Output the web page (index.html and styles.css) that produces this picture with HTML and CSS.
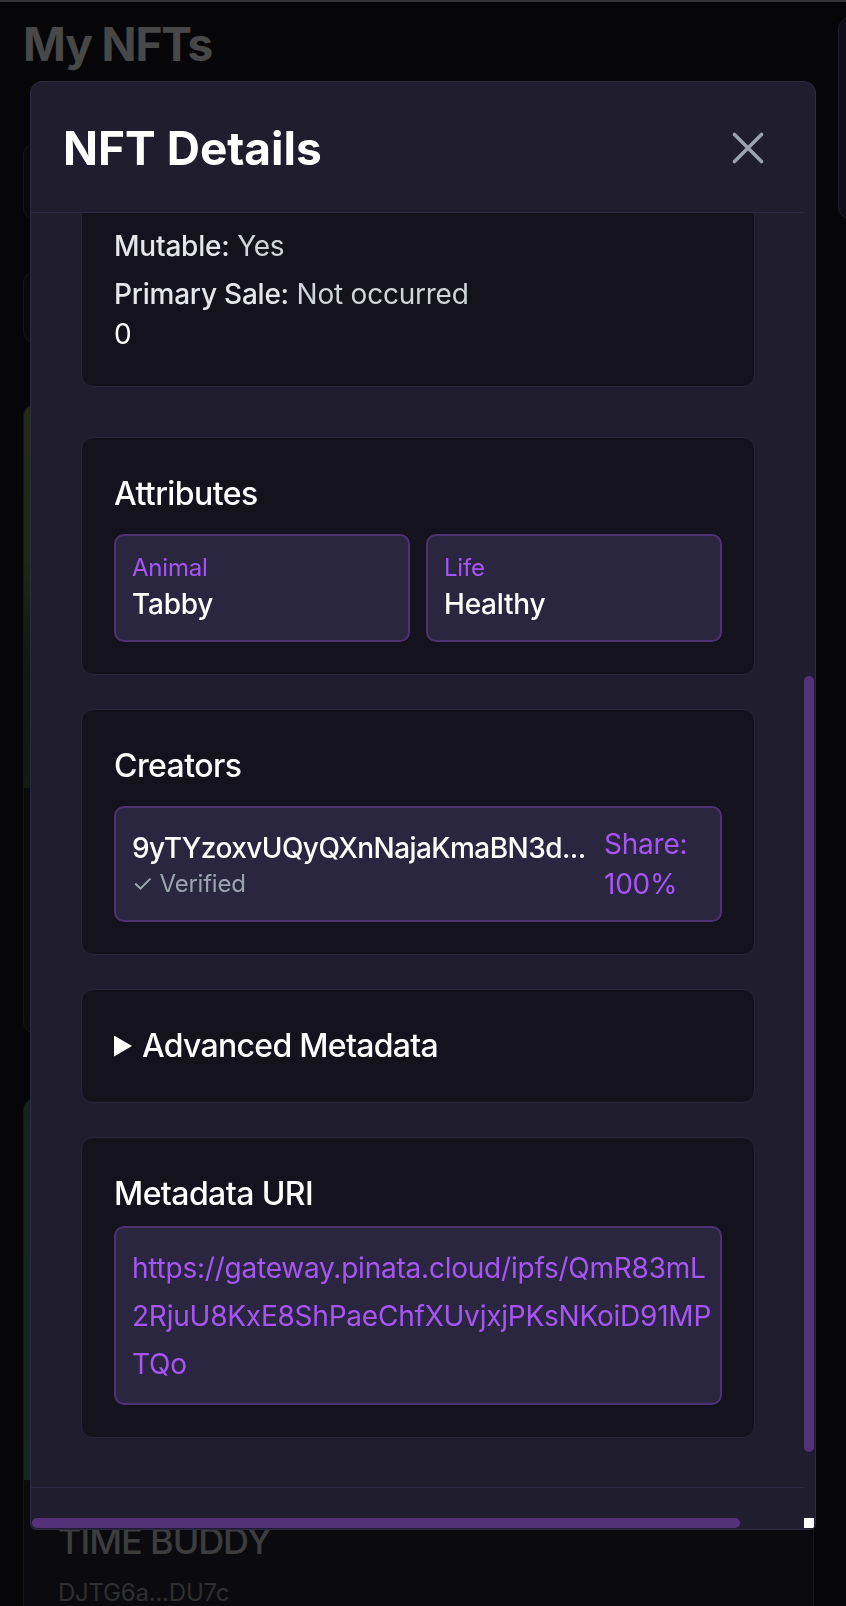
FILE: index.html
```html
<!DOCTYPE html>
<html lang="en">
<head>
<meta charset="utf-8">
<title>My NFTs</title>
<link rel="stylesheet" href="styles.css">
</head>
<body>
<div class="topline"></div>
<div class="page">
  <main class="main">
    <h1 class="page-title">My NFTs</h1>
    <div class="stub stub-a"></div>
    <div class="stub stub-b"></div>
    <article class="nft-card card-green">
      <div class="nft-img img-green"></div>
    </article>
    <article class="nft-card card-teal">
      <div class="nft-img img-teal"></div>
      <div class="nft-body">
        <h3 class="nft-name">TIME BUDDY</h3>
        <p class="nft-mint">DJTG6a...DU7c</p>
      </div>
    </article>
  </main>
  <aside class="side"></aside>
</div>

<div class="backdrop">
  <section class="modal">
    <div class="modal-main">
      <header class="modal-header">
        <h2 class="modal-title">NFT Details</h2>
        <button class="close-btn" aria-label="Close">
          <svg width="48" height="48" viewBox="0 0 48 48" fill="none"><path d="M10.5 10.5L37.5 37.5M37.5 10.5L10.5 37.5" stroke="currentColor" stroke-width="3.6" stroke-linecap="round"/></svg>
        </button>
      </header>
      <div class="modal-body">
        <div class="panel panel-props">
          <p class="kv"><span class="k">Mutable:</span> Yes</p>
          <p class="kv"><span class="k">Primary Sale:</span> Not occurred</p>
          <p class="plain">0</p>
        </div>
        <div class="panel">
          <h3 class="panel-title">Attributes</h3>
          <div class="attr-grid">
            <div class="chip">
              <div class="chip-label">Animal</div>
              <div class="chip-value">Tabby</div>
            </div>
            <div class="chip">
              <div class="chip-label">Life</div>
              <div class="chip-value">Healthy</div>
            </div>
          </div>
        </div>
        <div class="panel">
          <h3 class="panel-title">Creators</h3>
          <div class="chip creator">
            <div class="creator-info">
              <div class="creator-addr">9yTYzoxvUQyQXnNajaKmaBN3d...</div>
              <div class="creator-verified">✓ Verified</div>
            </div>
            <div class="creator-share">Share: 100%</div>
          </div>
        </div>
        <details class="panel adv">
          <summary class="adv-summary"><span class="tri"></span>Advanced Metadata</summary>
        </details>
        <div class="panel">
          <h3 class="panel-title tight">Metadata URI</h3>
          <div class="chip uri-box"><a class="uri" href="#"><span class="uri-line">https://gateway.pinata.cloud/ipfs/QmR83mL</span><span class="uri-line">2RjuU8KxE8ShPaeChfXUvjxjPKsNKoiD91MP</span><span class="uri-line">TQo</span></a></div>
        </div>
      </div>
      <footer class="modal-footer"></footer>
    </div>
    <div class="vscroll"><div class="vthumb"></div></div>
    <div class="hscroll"><div class="hthumb"></div></div>
    <div class="corner"></div>
  </section>
</div>
</body>
</html>
```

FILE: styles.css
```css
* { box-sizing: border-box; }
html, body { margin: 0; padding: 0; }
body {
  width: 846px;
  height: 1606px;
  overflow: hidden;
  background: #0f0f16;
  color: #fff;
  font-family: Inter, "Noto Sans", "Liberation Sans", sans-serif;
  letter-spacing: -0.014em;
}

/* background page (dimmed by backdrop) */
.topline { height: 2px; background: #808080; }
.page {
  display: grid;
  grid-template-columns: 791px 200px;
  column-gap: 24px;
  padding-left: 23px;
}
.page-title {
  margin: 10px 0 0;
  font-size: 46px;
  line-height: 64px;
  font-weight: 700;
  letter-spacing: -0.025em;
  color: #b4b4b4;
}
.stub {
  border: 1px solid #34344a;
  background: #17171f;
  border-radius: 12px;
}
.stub-a { margin-top: 67px; height: 77px; }
.stub-b { margin-top: 51px; height: 72px; }
.nft-card {
  border: 1px solid #34344a;
  background: #1c1c26;
  border-radius: 12px;
  overflow: hidden;
}
.card-green { margin-top: 61px; height: 630px; }
.img-green { height: 383px; background: linear-gradient(180deg, #5e6a34 0%, #56623a 40%, #2c3a28 70%, #34442e 100%); }
.card-teal { margin-top: 64px; height: 520px; }
.img-teal { height: 381px; background: linear-gradient(180deg, #3c5454 0%, #405a5a 100%); }
.nft-body { padding: 41px 32px 0 34px; }
.nft-name {
  margin: 0;
  font-size: 36px;
  line-height: 40px;
  font-weight: 500;
  letter-spacing: -0.03em;
  color: #989898;
}
.nft-mint {
  margin: 16px 0 0;
  font-size: 24px;
  line-height: 32px;
  color: #767676;
}
.side {
  margin-top: 15px;
  height: 202px;
  border: 1px solid #4a4670;
  background: #28233a;
  border-radius: 12px;
}

/* modal overlay */
.backdrop {
  position: fixed;
  inset: 0;
  background: rgba(0, 0, 0, 0.6);
  padding: 81px 0 0 30px;
}
.modal {
  width: 786px;
  height: 1449px;
  background: #1f1d2e;
  border: 1px solid #2c2942;
  border-radius: 12px 12px 6px 6px;
  overflow: hidden;
  display: grid;
  grid-template-columns: 1fr 11px;
  grid-template-rows: 1fr 11px;
}
.modal-main {
  grid-column: 1;
  grid-row: 1;
  min-height: 0;
  display: flex;
  flex-direction: column;
  overflow: hidden;
}
.modal-header {
  flex: 0 0 131px;
  display: flex;
  align-items: center;
  justify-content: space-between;
  padding: 2px 32px 0 32px;
  border-bottom: 1px solid #2c2942;
}
.modal-title {
  margin: 0;
  font-size: 46px;
  line-height: 64px;
  font-weight: 700;
  letter-spacing: 0;
  color: #fff;
}
.close-btn {
  display: flex;
  padding: 0;
  border: 0;
  background: none;
  color: #9ca3af;
}
.modal-body {
  flex: 1 1 auto;
  min-height: 0;
  overflow: hidden;
  display: flex;
  flex-direction: column;
  gap: 34px;
  padding: 0 49px 48px 50px;
}
.modal-footer {
  flex: 0 0 31px;
  border-top: 1px solid #2c2942;
}

.panel {
  flex-shrink: 0;
  background: #14121c;
  border: 1px solid #28253c;
  border-radius: 12px;
  padding: 32px;
}
.panel-props { margin-top: -20px; margin-bottom: 16px; }
.panel-title {
  margin: 0 0 16px;
  font-size: 32px;
  line-height: 48px;
  font-weight: 500;
  letter-spacing: -0.018em;
  color: #fff;
}
.panel-title.tight { margin-bottom: 8px; }

.kv {
  margin: 0;
  font-size: 28px;
  line-height: 40px;
  color: #d1d5db;
}
.kv + .kv { margin-top: 8px; }
.kv .k { font-weight: 500; color: #e5e7eb; }
.plain {
  margin: 0;
  font-size: 28px;
  line-height: 40px;
  color: #fff;
}

.attr-grid {
  display: grid;
  grid-template-columns: 1fr 1fr;
  gap: 16px;
}
.chip {
  background: #2a2640;
  border: 2px solid #4d3273;
  border-radius: 10px;
  padding: 16px;
}
.chip-label {
  font-size: 24px;
  line-height: 32px;
  color: #a855f7;
}
.chip-value {
  font-size: 28px;
  line-height: 40px;
  font-weight: 500;
  color: #fff;
}

.creator {
  display: flex;
  align-items: center;
  gap: 16px;
}
.creator-info { flex: 1 1 auto; min-width: 0; }
.creator-addr {
  font-size: 28px;
  line-height: 40px;
  font-weight: 500;
  letter-spacing: -0.02em;
  color: #fff;
  white-space: nowrap;
}
.creator-verified {
  font-size: 24px;
  line-height: 32px;
  color: #9ca3af;
}
.creator-share {
  flex: 0 0 100px;
  font-size: 28px;
  line-height: 40px;
  color: #a855f7;
}

.adv-summary {
  list-style: none;
  display: flex;
  align-items: center;
  gap: 10px;
  font-size: 32px;
  line-height: 48px;
  font-weight: 500;
  letter-spacing: -0.022em;
  color: #fff;
  cursor: pointer;
}
.adv-summary::-webkit-details-marker { display: none; }
.tri {
  width: 18px;
  height: 21px;
  background: #fff;
  clip-path: polygon(0 0, 100% 50%, 0 100%);
}

.uri-box {
  font-size: 32px;
  line-height: 48px;
  padding-top: 15.5px;
  padding-bottom: 15.5px;
}
.uri {
  font-size: 28px;
  color: #a855f7;
  text-decoration: none;
}
.uri-line {
  display: block;
  white-space: nowrap;
}

/* scrollbars */
.vscroll { grid-column: 2; grid-row: 1; padding-top: 594px; }
.vthumb { width: 10px; height: 776px; border-radius: 5px; background: #54327a; }
.hscroll { grid-column: 1; grid-row: 2; padding-left: 1px; }
.hthumb { width: 708px; height: 10px; border-radius: 5px; background: #54327a; }
.corner { grid-column: 2; grid-row: 2; width: 10px; height: 10px; background: #fff; }
```
